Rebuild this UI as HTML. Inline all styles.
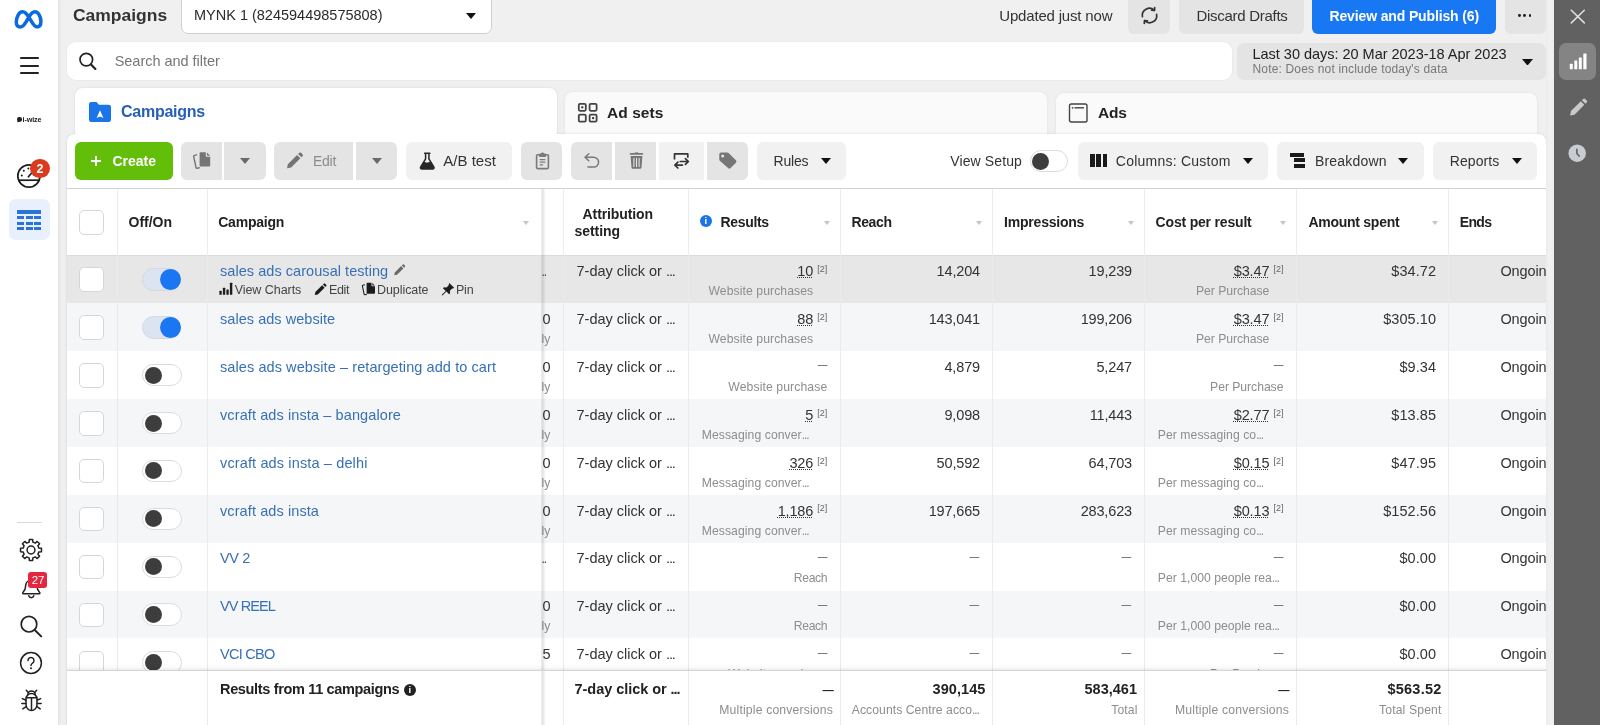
<!DOCTYPE html>
<html lang="en"><head><meta charset="utf-8"><title>Campaigns</title>
<style>
*{box-sizing:border-box;margin:0;padding:0}
html,body{width:1600px;height:725px;overflow:hidden}
body{position:relative;background:#f0f0f0;font-family:"Liberation Sans",sans-serif;color:#1c1e21;font-size:14.5px}
.t{position:absolute;white-space:nowrap;line-height:1;display:block}
.abs,.box,svg.ic{position:absolute}
.box{display:block}
/* left nav */
#nav{left:0;top:0;width:58px;height:725px;background:#fff;box-shadow:1px 0 0 #e6e6e6,2px 0 4px rgba(0,0,0,.05)}
/* right rail */
#rail{left:1554px;top:0;width:46px;height:725px;background:#616161}
#railgap{left:1546px;top:0;width:8px;height:725px;background:linear-gradient(90deg,#ebebeb,#f1f1f1 40%,#f0f0f0 85%,#eaeaea)}
.btn{border-radius:6px;background:#e4e4e4}
.btn.l{background:#f1f1f1}
.btn.sq-l{border-radius:6px 0 0 6px}
.btn.sq-r{border-radius:0 6px 6px 0}
#panel{left:67px;top:134px;width:1479px;height:600px;background:#fff;border-radius:8px 8px 0 0;box-shadow:0 0 3px rgba(0,0,0,.12)}
.tab{border-radius:8px 8px 0 0;background:#fafafa}
.row{left:67px;width:1479px;height:48px}
.vl{width:1px;background:#ebebeb}
.cb{width:24.4px;height:24.4px;left:79.2px;border:1px solid #d6d6d6;border-radius:5px;background:#fff}
.tg{left:142px;width:39.5px;height:22.5px;border-radius:12px;border:1px solid #dcdcdc;background:#fff}
.tg i{position:absolute;display:block;border-radius:50%}
.tg.off i{left:2.1px;top:1.8px;width:17px;height:17px;background:#3d3d3d}
.tg.on{background:#dbe4f0;border-color:#d2d9e2;width:38.6px}
.tg.on i{left:17.3px;top:-0.2px;width:20.8px;height:20.8px;background:#1b76f2}
.du{border-bottom:1.3px dotted #555;padding-bottom:0}
.sub{color:#8d8d8d}
.clip{overflow:hidden;text-overflow:ellipsis}
.car{width:0;height:0;border-left:5px solid transparent;border-right:5px solid transparent;border-top:6px solid #111}
.scar{width:0;height:0;border-left:3.5px solid transparent;border-right:3.5px solid transparent;border-top:4.5px solid #c3c5ca}

#app{position:absolute;left:0;top:0;width:1600px;height:725px;overflow:hidden;will-change:transform}

</style></head><body><div id="app">
<span id="t0" class="t " style="top:8.00px;font-size:16px;font-weight:700;color:#333;left:72.50px;transform:scaleX(1.0920);transform-origin:0 0;">Campaigns</span>
<div class="box " style="left:180.5px;top:-6px;width:311.50px;height:39.50px;background:#fff;border:1px solid #cfcfcf;border-radius:7px"></div>
<span id="t1" class="t " style="top:8.00px;font-size:14.5px;color:#2b2b2b;left:194.00px;letter-spacing:-0.006px;">MYNK 1 (824594498575808)</span>
<div class="box car" style="left:465.5px;top:12.5px;width:10.50px;height:6.50px;border-left-width:5.2px;border-right-width:5.2px;border-top-width:6.2px"></div>
<span id="t2" class="t " style="top:8.00px;font-size:15px;color:#333;left:999.30px;letter-spacing:-0.182px;">Updated just now</span>
<div class="box btn" style="left:1128px;top:-6px;width:42.00px;height:39.80px;"></div>
<div class="box btn" style="left:1178.5px;top:-6px;width:125.50px;height:39.80px;"></div>
<span id="t3" class="t " style="top:8.00px;font-size:15px;color:#333;left:1196.50px;letter-spacing:-0.288px;">Discard Drafts</span>
<div class="box btn" style="left:1312.2px;top:-6px;width:183.80px;height:39.80px;background:#1877f2"></div>
<span id="t4" class="t " style="top:9.00px;font-size:14px;font-weight:700;color:#fff;left:1329.50px;letter-spacing:-0.136px;">Review and Publish (6)</span>
<div class="box btn" style="left:1504.5px;top:-6px;width:41.00px;height:39.80px;"></div>
<div class="box " style="left:1518.1px;top:14.1px;width:2.80px;height:2.80px;background:#222;border-radius:50%"></div>
<div class="box " style="left:1523.3999999999999px;top:14.1px;width:2.80px;height:2.80px;background:#222;border-radius:50%"></div>
<div class="box " style="left:1528.6999999999998px;top:14.1px;width:2.80px;height:2.80px;background:#222;border-radius:50%"></div>
<svg class="ic" style="left:1139px;top:5.4px" width="21" height="21" viewBox="0 0 21 21" ><g fill="none" stroke="#333" stroke-width="1.700" stroke-linecap="round" stroke-linejoin="round"><path d="M3.400 11.700a7.100 7.100 0 0 1 11.900-6.400"/><path d="M17.600 9.300a7.100 7.100 0 0 1-11.900 6.400"/><path d="M15.700 2.600l-.2 2.900-2.900-.3"/><path d="M5.300 18.400l.2-2.900 2.900.3"/></g></svg>
<div class="box " style="left:66.5px;top:42.3px;width:1165.00px;height:37.50px;background:#fff;border-radius:9px;box-shadow:0 0 2px rgba(0,0,0,.08)"></div>
<svg class="ic" style="left:77px;top:50px" width="22" height="22" viewBox="0 0 22 22" ><g fill="none" stroke="#222" stroke-width="1.7" stroke-linecap="round"><circle cx="9.3" cy="9.6" r="6.3"/><path d="M14 14.4l4.400 4.500" stroke-width="2.200"/></g></svg>
<span id="t5" class="t " style="top:54.00px;font-size:14.5px;color:#767676;left:114.70px;letter-spacing:-0.029px;">Search and filter</span>
<div class="box btn" style="left:1236.5px;top:42.5px;width:309.00px;height:37.30px;border-radius:7px"></div>
<span id="t6" class="t " style="top:47.00px;font-size:14.5px;color:#222;left:1252.50px;letter-spacing:-0.020px;">Last 30 days: 20 Mar 2023-18 Apr 2023</span>
<span id="t7" class="t " style="top:63.00px;font-size:12px;color:#777;left:1252.50px;letter-spacing:0.169px;">Note: Does not include today's data</span>
<div class="box car" style="left:1521.5px;top:59px;width:11.50px;height:7.00px;border-left-width:5.7px;border-right-width:5.7px;border-top-width:6.6px"></div>
<div class="box tab" style="left:75px;top:88px;width:481.50px;height:52.00px;background:#fff;box-shadow:0 0 3px rgba(0,0,0,.10)"></div>
<div class="box tab" style="left:565px;top:92.4px;width:482.00px;height:47.60px;box-shadow:0 0 3px rgba(0,0,0,.07)"></div>
<div class="box tab" style="left:1056px;top:92.5px;width:481.00px;height:47.50px;box-shadow:0 0 3px rgba(0,0,0,.07)"></div>
<div class="box" id="panel"></div>
<div class="box " style="left:76px;top:128px;width:480.00px;height:8.00px;background:#fff"></div>
<svg class="ic" style="left:88px;top:100.6px" width="24" height="22" viewBox="0 0 24 22" ><path d="M1 3.2A2.2 2.2 0 0 1 3.2 1h5.3l2.4 2.8h9.9A2.2 2.2 0 0 1 23 6v12.8a2.2 2.2 0 0 1-2.2 2.2H3.2A2.2 2.2 0 0 1 1 18.800z" fill="#1b74e8"/><path d="M12 9.300l3.400 7.600-3.400-1.500-3.400 1.500z" fill="#fff"/></svg>
<span id="t8" class="t " style="top:104.00px;font-size:16px;font-weight:700;color:#2760b8;left:121.00px;letter-spacing:-0.250px;">Campaigns</span>
<svg class="ic" style="left:577.3px;top:102px" width="22" height="22" viewBox="0 0 22 22" ><g fill="none" stroke="#444" stroke-width="1.8"><rect x="1.8" y="1.800" width="7" height="7" rx="1.2"/><rect x="12.6" y="1.800" width="7" height="7" rx="1.2"/><rect x="1.8" y="12.600" width="7" height="7" rx="1.2"/><rect x="12.6" y="12.600" width="7" height="7" rx="1.2"/></g><rect x="4.300" y="4.300" width="2" height="2" fill="#333"/><rect x="15.100" y="15.100" width="2" height="2" fill="#333"/></svg>
<span id="t9" class="t " style="top:105.00px;font-size:15.5px;font-weight:700;color:#222;left:607.00px;letter-spacing:0.071px;">Ad sets</span>
<svg class="ic" style="left:1068px;top:101.5px" width="22" height="22" viewBox="0 0 22 22" ><g fill="none" stroke="#444" stroke-width="1.4"><rect x="1.500" y="2" width="17.500" height="18" rx="1.8"/><path d="M6.500 5.800h9.500"/></g><circle cx="4.600" cy="5.800" r="0.900" fill="#444"/></svg>
<span id="t10" class="t " style="top:105.00px;font-size:15.5px;font-weight:700;color:#222;left:1098.00px;letter-spacing:-0.266px;">Ads</span>
<div class="box btn" style="left:75px;top:142.3px;width:97.50px;height:37.50px;background:#63be09"></div>
<div class="box " style="left:91px;top:160.2px;width:10.20px;height:1.60px;background:#fff"></div>
<div class="box " style="left:95.3px;top:156px;width:1.60px;height:10.00px;background:#fff"></div>
<span id="t11" class="t " style="top:154.00px;font-size:14px;font-weight:700;color:#fff;left:112.50px;letter-spacing:-0.016px;">Create</span>
<div class="box btn sq-l" style="left:181px;top:142.3px;width:41.30px;height:37.50px;"></div>
<div class="box btn sq-r" style="left:224px;top:142.3px;width:41.80px;height:37.50px;"></div>
<div class="box " style="left:240.0px;top:158.0px;width:10.40px;height:6.40px;width:0;height:0;border-left:5.2px solid transparent;border-right:5.2px solid transparent;border-top:6.4px solid #6a6a6a"></div>
<div class="box btn sq-l" style="left:274px;top:142.3px;width:79.00px;height:37.50px;"></div>
<span id="t12" class="t " style="top:154.00px;font-size:14px;color:#8c8c8c;left:312.90px;letter-spacing:-0.206px;">Edit</span>
<div class="box btn sq-r" style="left:356px;top:142.3px;width:41.00px;height:37.50px;"></div>
<div class="box " style="left:371.5px;top:158.0px;width:10.40px;height:6.40px;width:0;height:0;border-left:5.2px solid transparent;border-right:5.2px solid transparent;border-top:6.4px solid #6a6a6a"></div>
<div class="box btn l" style="left:406.3px;top:142.3px;width:106.00px;height:37.50px;"></div>
<span id="t13" class="t " style="top:153.00px;font-size:15px;color:#333;left:443.20px;letter-spacing:0.034px;">A/B test</span>
<div class="box btn" style="left:521px;top:142.3px;width:41.40px;height:37.50px;"></div>
<div class="box btn sq-l" style="left:571px;top:142.3px;width:41.00px;height:37.50px;"></div>
<div class="box btn" style="left:615px;top:142.3px;width:41.30px;height:37.50px;border-radius:0"></div>
<div class="box btn l" style="left:658.7px;top:142.3px;width:45.00px;height:37.50px;border-radius:0"></div>
<div class="box btn sq-r" style="left:707px;top:142.3px;width:40.80px;height:37.50px;"></div>
<div class="box btn l" style="left:757.2px;top:142.3px;width:88.80px;height:37.50px;"></div>
<span id="t14" class="t " style="top:154.00px;font-size:14px;color:#333;left:773.50px;letter-spacing:-0.199px;">Rules</span>
<div class="box " style="left:820.5999999999999px;top:158.3px;width:10.40px;height:6.20px;width:0;height:0;border-left:5.2px solid transparent;border-right:5.2px solid transparent;border-top:6.2px solid #111"></div>
<span id="t15" class="t " style="top:154.00px;font-size:14px;color:#333;left:950.30px;letter-spacing:0.112px;">View Setup</span>
<div class="box " style="left:1030.4px;top:150.3px;width:38.10px;height:21.70px;background:#fff;border:1px solid #dcdcdc;border-radius:11px"></div>
<div class="box " style="left:1032.4px;top:152.7px;width:17.00px;height:17.00px;background:#3d3d3d;border-radius:50%"></div>
<div class="box btn l" style="left:1078px;top:142.3px;width:190.00px;height:37.50px;"></div>
<div class="box " style="left:1090px;top:154px;width:4.50px;height:13.20px;background:#1a1a1a"></div>
<div class="box " style="left:1096.3px;top:154px;width:4.50px;height:13.20px;background:#1a1a1a"></div>
<div class="box " style="left:1102.6px;top:154px;width:4.50px;height:13.20px;background:#1a1a1a"></div>
<span id="t16" class="t " style="top:154.00px;font-size:14px;color:#333;left:1115.80px;letter-spacing:0.236px;">Columns: Custom</span>
<div class="box " style="left:1242.7px;top:158.3px;width:10.40px;height:6.20px;width:0;height:0;border-left:5.2px solid transparent;border-right:5.2px solid transparent;border-top:6.2px solid #111"></div>
<div class="box btn l" style="left:1277px;top:142.3px;width:146.80px;height:37.50px;"></div>
<div class="box " style="left:1290px;top:153px;width:13.50px;height:3.60px;background:#1a1a1a"></div>
<div class="box " style="left:1294px;top:158.4px;width:11.00px;height:3.60px;background:#1a1a1a"></div>
<div class="box " style="left:1294px;top:163.9px;width:11.00px;height:3.70px;background:#1a1a1a"></div>
<span id="t17" class="t " style="top:154.00px;font-size:14px;color:#333;left:1315.00px;letter-spacing:0.184px;">Breakdown</span>
<div class="box " style="left:1398.0px;top:158.3px;width:10.40px;height:6.20px;width:0;height:0;border-left:5.2px solid transparent;border-right:5.2px solid transparent;border-top:6.2px solid #111"></div>
<div class="box btn l" style="left:1432.6px;top:142.3px;width:104.90px;height:37.50px;"></div>
<span id="t18" class="t " style="top:154.00px;font-size:14px;color:#333;left:1449.70px;letter-spacing:0.096px;">Reports</span>
<div class="box " style="left:1511.8px;top:158.3px;width:10.40px;height:6.20px;width:0;height:0;border-left:5.2px solid transparent;border-right:5.2px solid transparent;border-top:6.2px solid #111"></div>
<div class="box " style="left:67px;top:188.3px;width:1479.00px;height:1.00px;background:#d2d2d2"></div>
<div class="box " style="left:67px;top:255px;width:1479.00px;height:48.00px;background:#e7e7e7"></div>
<div class="box " style="left:67px;top:303px;width:1479.00px;height:48.00px;background:#f5f6f7"></div>
<div class="box " style="left:67px;top:399px;width:1479.00px;height:48.00px;background:#f5f6f7"></div>
<div class="box " style="left:67px;top:495px;width:1479.00px;height:48.00px;background:#f5f6f7"></div>
<div class="box " style="left:67px;top:591px;width:1479.00px;height:47.00px;background:#f5f6f7"></div>
<div class="box " style="left:67px;top:254.6px;width:1479.00px;height:0.80px;background:#dcdcdc"></div>
<div class="box vl" style="left:116.5px;top:189px;width:1.00px;height:482.00px;"></div>
<div class="box vl" style="left:206.5px;top:189px;width:1.00px;height:536.00px;"></div>
<div class="box vl" style="left:562.9px;top:189px;width:1.00px;height:536.00px;"></div>
<div class="box vl" style="left:687.9px;top:189px;width:1.00px;height:536.00px;"></div>
<div class="box vl" style="left:840.0px;top:189px;width:1.00px;height:536.00px;"></div>
<div class="box vl" style="left:991.9px;top:189px;width:1.00px;height:536.00px;"></div>
<div class="box vl" style="left:1143.9px;top:189px;width:1.00px;height:536.00px;"></div>
<div class="box vl" style="left:1296.1px;top:189px;width:1.00px;height:536.00px;"></div>
<div class="box vl" style="left:1448.1px;top:189px;width:1.00px;height:536.00px;"></div>
<span id="t19" class="t " style="top:215.00px;font-size:14px;font-weight:700;color:#222;left:128.50px;letter-spacing:-0.008px;">Off/On</span>
<span id="t20" class="t " style="top:215.00px;font-size:14px;font-weight:700;color:#222;left:218.20px;letter-spacing:-0.211px;">Campaign</span>
<span id="t21" class="t " style="top:215.00px;font-size:14px;font-weight:700;color:#222;left:720.60px;letter-spacing:-0.340px;">Results</span>
<span id="t22" class="t " style="top:215.00px;font-size:14px;font-weight:700;color:#222;left:851.40px;letter-spacing:-0.366px;">Reach</span>
<span id="t23" class="t " style="top:215.00px;font-size:14px;font-weight:700;color:#222;left:1004.10px;letter-spacing:-0.217px;">Impressions</span>
<span id="t24" class="t " style="top:215.00px;font-size:14px;font-weight:700;color:#222;left:1155.60px;letter-spacing:-0.188px;">Cost per result</span>
<span id="t25" class="t " style="top:215.00px;font-size:14px;font-weight:700;color:#222;left:1308.40px;letter-spacing:-0.259px;">Amount spent</span>
<span id="t26" class="t " style="top:215.00px;font-size:14px;font-weight:700;color:#222;left:1459.70px;letter-spacing:-0.634px;">Ends</span>
<span id="t27" class="t " style="top:207.00px;font-size:14px;font-weight:700;color:#222;left:582.60px;letter-spacing:-0.103px;">Attribution</span>
<span id="t28" class="t " style="top:224.00px;font-size:14px;font-weight:700;color:#222;left:574.60px;letter-spacing:-0.070px;">setting</span>
<div class="box " style="left:523.2px;top:220.9px;width:7.60px;height:4.80px;width:0;height:0;border-left:3.8px solid transparent;border-right:3.8px solid transparent;border-top:4.8px solid #c2c4c9"></div>
<div class="box " style="left:823.7px;top:220.9px;width:7.60px;height:4.80px;width:0;height:0;border-left:3.8px solid transparent;border-right:3.8px solid transparent;border-top:4.8px solid #c2c4c9"></div>
<div class="box " style="left:975.6px;top:220.9px;width:7.60px;height:4.80px;width:0;height:0;border-left:3.8px solid transparent;border-right:3.8px solid transparent;border-top:4.8px solid #c2c4c9"></div>
<div class="box " style="left:1127.6000000000001px;top:220.9px;width:7.60px;height:4.80px;width:0;height:0;border-left:3.8px solid transparent;border-right:3.8px solid transparent;border-top:4.8px solid #c2c4c9"></div>
<div class="box " style="left:1279.6000000000001px;top:220.9px;width:7.60px;height:4.80px;width:0;height:0;border-left:3.8px solid transparent;border-right:3.8px solid transparent;border-top:4.8px solid #c2c4c9"></div>
<div class="box " style="left:1431.7px;top:220.9px;width:7.60px;height:4.80px;width:0;height:0;border-left:3.8px solid transparent;border-right:3.8px solid transparent;border-top:4.8px solid #c2c4c9"></div>
<div class="box " style="left:699.8px;top:214.8px;width:12.40px;height:12.40px;background:#1b74e8;border-radius:50%"></div>
<span id="t29" class="t " style="top:216.00px;font-size:9.5px;font-weight:700;color:#fff;left:704.50px;font-family:"Liberation Serif",serif;">i</span>
<div class="box cb" style="left:79px;top:210px;width:24.60px;height:24.50px;"></div>
<div class="box" style="left:0;top:0;width:1600px;height:671px;overflow:hidden"><div class="box cb" style="left:79px;top:267.3px;width:24.60px;height:24.50px;"></div>
<div class="box tg on" style="top:268.1px"><i></i></div>
<span id="t30" class="t " style="top:264.00px;font-size:14.5px;color:#3870b6;left:220.00px;letter-spacing:0.052px;">sales ads carousal testing</span>
<span id="t31" class="t " style="top:266.00px;font-size:12px;color:#444;left:541.40px;letter-spacing:-1px;">..</span>
<span id="t32" class="t " style="top:264.00px;font-size:14.5px;color:#333;left:576.50px;letter-spacing:0.002px;">7-day click or <span style="letter-spacing:-1.1px">...</span></span>
<span id="t33" class="t " style="top:264.00px;font-size:14.5px;color:#333;right:786.80px;letter-spacing:-0.15px;text-decoration:underline dotted #333;text-decoration-thickness:1.3px;text-underline-offset:0.5px;text-decoration-skip-ink:none;">10</span><span id="t34" class="t " style="top:265.00px;font-size:9px;color:#666;right:772.70px;">[2]</span><span id="t35" class="t " style="top:285.00px;font-size:12.2px;color:#8d8d8d;left:708.50px;letter-spacing:0.075px;">Website purchases</span>
<span id="t36" class="t " style="top:264.00px;font-size:14.5px;color:#333;right:620.00px;letter-spacing:-0.15px;">14,204</span>
<span id="t37" class="t " style="top:264.00px;font-size:14.5px;color:#333;right:468.00px;letter-spacing:-0.15px;">19,239</span>
<span id="t38" class="t " style="top:264.00px;font-size:14.5px;color:#333;right:330.70px;letter-spacing:-0.15px;text-decoration:underline dotted #333;text-decoration-thickness:1.3px;text-underline-offset:0.5px;text-decoration-skip-ink:none;">$3.47</span><span id="t39" class="t " style="top:265.00px;font-size:9px;color:#666;right:316.60px;">[2]</span><span id="t40" class="t " style="top:285.00px;font-size:12.2px;color:#8d8d8d;left:1196.00px;letter-spacing:-0.045px;">Per Purchase</span>
<span id="t41" class="t " style="top:264.00px;font-size:14.5px;color:#333;right:163.90px;letter-spacing:-0.15px;letter-spacing:0.08px;">$34.72</span>
<span id="t42" class="t " style="top:264.00px;font-size:14.5px;color:#333;left:1500.40px;letter-spacing:-0.1px;">Ongoing</span>
<div class="box cb" style="left:79px;top:315.2px;width:24.60px;height:24.50px;"></div>
<div class="box tg on" style="top:316.0px"><i></i></div>
<span id="t43" class="t " style="top:312.00px;font-size:14.5px;color:#3870b6;left:220.00px;letter-spacing:0.044px;">sales ads website</span>
<span id="t44" class="t " style="top:312.00px;font-size:14.5px;color:#333;left:542.60px;">0</span>
<span id="t45" class="t " style="top:333.00px;font-size:12.2px;color:#8d8d8d;left:541.60px;">ly</span>
<span id="t46" class="t " style="top:312.00px;font-size:14.5px;color:#333;left:576.50px;letter-spacing:0.002px;">7-day click or <span style="letter-spacing:-1.1px">...</span></span>
<span id="t47" class="t " style="top:312.00px;font-size:14.5px;color:#333;right:786.80px;letter-spacing:-0.15px;text-decoration:underline dotted #333;text-decoration-thickness:1.3px;text-underline-offset:0.5px;text-decoration-skip-ink:none;">88</span><span id="t48" class="t " style="top:313.00px;font-size:9px;color:#666;right:772.70px;">[2]</span><span id="t49" class="t " style="top:333.00px;font-size:12.2px;color:#8d8d8d;left:708.50px;letter-spacing:0.075px;">Website purchases</span>
<span id="t50" class="t " style="top:312.00px;font-size:14.5px;color:#333;right:620.00px;letter-spacing:-0.15px;">143,041</span>
<span id="t51" class="t " style="top:312.00px;font-size:14.5px;color:#333;right:468.00px;letter-spacing:-0.15px;">199,206</span>
<span id="t52" class="t " style="top:312.00px;font-size:14.5px;color:#333;right:330.70px;letter-spacing:-0.15px;text-decoration:underline dotted #333;text-decoration-thickness:1.3px;text-underline-offset:0.5px;text-decoration-skip-ink:none;">$3.47</span><span id="t53" class="t " style="top:313.00px;font-size:9px;color:#666;right:316.60px;">[2]</span><span id="t54" class="t " style="top:333.00px;font-size:12.2px;color:#8d8d8d;left:1196.00px;letter-spacing:-0.045px;">Per Purchase</span>
<span id="t55" class="t " style="top:312.00px;font-size:14.5px;color:#333;right:163.90px;letter-spacing:-0.15px;letter-spacing:0.08px;">$305.10</span>
<span id="t56" class="t " style="top:312.00px;font-size:14.5px;color:#333;left:1500.40px;letter-spacing:-0.1px;">Ongoing</span>
<div class="box cb" style="left:79px;top:363.1px;width:24.60px;height:24.50px;"></div>
<div class="box tg off" style="top:363.90000000000003px"><i></i></div>
<span id="t57" class="t " style="top:360.00px;font-size:14.5px;color:#3870b6;left:220.00px;letter-spacing:0.083px;">sales ads website – retargeting add to cart</span>
<span id="t58" class="t " style="top:360.00px;font-size:14.5px;color:#333;left:542.60px;">0</span>
<span id="t59" class="t " style="top:381.00px;font-size:12.2px;color:#8d8d8d;left:541.60px;">ly</span>
<span id="t60" class="t " style="top:360.00px;font-size:14.5px;color:#333;left:576.50px;letter-spacing:0.002px;">7-day click or <span style="letter-spacing:-1.1px">...</span></span>
<span id="t61" class="t " style="top:360.00px;font-size:9.7px;font-weight:700;color:#707070;right:772.70px;">—</span><span id="t62" class="t " style="top:381.00px;font-size:12.2px;color:#8d8d8d;left:728.30px;letter-spacing:0.104px;">Website purchase</span>
<span id="t63" class="t " style="top:360.00px;font-size:14.5px;color:#333;right:620.00px;letter-spacing:-0.15px;">4,879</span>
<span id="t64" class="t " style="top:360.00px;font-size:14.5px;color:#333;right:468.00px;letter-spacing:-0.15px;">5,247</span>
<span id="t65" class="t " style="top:360.00px;font-size:9.7px;font-weight:700;color:#707070;right:316.60px;">—</span><span id="t66" class="t " style="top:381.00px;font-size:12.2px;color:#8d8d8d;left:1210.10px;letter-spacing:-0.045px;">Per Purchase</span>
<span id="t67" class="t " style="top:360.00px;font-size:14.5px;color:#333;right:163.90px;letter-spacing:-0.15px;letter-spacing:0.08px;">$9.34</span>
<span id="t68" class="t " style="top:360.00px;font-size:14.5px;color:#333;left:1500.40px;letter-spacing:-0.1px;">Ongoing</span>
<div class="box cb" style="left:79px;top:411.0px;width:24.60px;height:24.50px;"></div>
<div class="box tg off" style="top:411.8px"><i></i></div>
<span id="t69" class="t " style="top:408.00px;font-size:14.5px;color:#3870b6;left:220.00px;letter-spacing:0.102px;">vcraft ads insta – bangalore</span>
<span id="t70" class="t " style="top:408.00px;font-size:14.5px;color:#333;left:542.60px;">0</span>
<span id="t71" class="t " style="top:429.00px;font-size:12.2px;color:#8d8d8d;left:541.60px;">ly</span>
<span id="t72" class="t " style="top:408.00px;font-size:14.5px;color:#333;left:576.50px;letter-spacing:0.002px;">7-day click or <span style="letter-spacing:-1.1px">...</span></span>
<span id="t73" class="t " style="top:408.00px;font-size:14.5px;color:#333;right:786.80px;letter-spacing:-0.15px;text-decoration:underline dotted #333;text-decoration-thickness:1.3px;text-underline-offset:0.5px;text-decoration-skip-ink:none;">5</span><span id="t74" class="t " style="top:409.00px;font-size:9px;color:#666;right:772.70px;">[2]</span><span id="t75" class="t " style="top:429.00px;font-size:12.2px;color:#8d8d8d;left:701.70px;letter-spacing:0.070px;">Messaging conver<span style="letter-spacing:-1.1px">...</span></span>
<span id="t76" class="t " style="top:408.00px;font-size:14.5px;color:#333;right:620.00px;letter-spacing:-0.15px;">9,098</span>
<span id="t77" class="t " style="top:408.00px;font-size:14.5px;color:#333;right:468.00px;letter-spacing:-0.15px;">11,443</span>
<span id="t78" class="t " style="top:408.00px;font-size:14.5px;color:#333;right:330.70px;letter-spacing:-0.15px;text-decoration:underline dotted #333;text-decoration-thickness:1.3px;text-underline-offset:0.5px;text-decoration-skip-ink:none;">$2.77</span><span id="t79" class="t " style="top:409.00px;font-size:9px;color:#666;right:316.60px;">[2]</span><span id="t80" class="t " style="top:429.00px;font-size:12.2px;color:#8d8d8d;left:1157.80px;letter-spacing:0.050px;">Per messaging co<span style="letter-spacing:-1.1px">...</span></span>
<span id="t81" class="t " style="top:408.00px;font-size:14.5px;color:#333;right:163.90px;letter-spacing:-0.15px;letter-spacing:0.08px;">$13.85</span>
<span id="t82" class="t " style="top:408.00px;font-size:14.5px;color:#333;left:1500.40px;letter-spacing:-0.1px;">Ongoing</span>
<div class="box cb" style="left:79px;top:458.9px;width:24.60px;height:24.50px;"></div>
<div class="box tg off" style="top:459.7px"><i></i></div>
<span id="t83" class="t " style="top:456.00px;font-size:14.5px;color:#3870b6;left:220.00px;letter-spacing:0.134px;">vcraft ads insta – delhi</span>
<span id="t84" class="t " style="top:456.00px;font-size:14.5px;color:#333;left:542.60px;">0</span>
<span id="t85" class="t " style="top:477.00px;font-size:12.2px;color:#8d8d8d;left:541.60px;">ly</span>
<span id="t86" class="t " style="top:456.00px;font-size:14.5px;color:#333;left:576.50px;letter-spacing:0.002px;">7-day click or <span style="letter-spacing:-1.1px">...</span></span>
<span id="t87" class="t " style="top:456.00px;font-size:14.5px;color:#333;right:786.80px;letter-spacing:-0.15px;text-decoration:underline dotted #333;text-decoration-thickness:1.3px;text-underline-offset:0.5px;text-decoration-skip-ink:none;">326</span><span id="t88" class="t " style="top:457.00px;font-size:9px;color:#666;right:772.70px;">[2]</span><span id="t89" class="t " style="top:477.00px;font-size:12.2px;color:#8d8d8d;left:701.70px;letter-spacing:0.070px;">Messaging conver<span style="letter-spacing:-1.1px">...</span></span>
<span id="t90" class="t " style="top:456.00px;font-size:14.5px;color:#333;right:620.00px;letter-spacing:-0.15px;">50,592</span>
<span id="t91" class="t " style="top:456.00px;font-size:14.5px;color:#333;right:468.00px;letter-spacing:-0.15px;">64,703</span>
<span id="t92" class="t " style="top:456.00px;font-size:14.5px;color:#333;right:330.70px;letter-spacing:-0.15px;text-decoration:underline dotted #333;text-decoration-thickness:1.3px;text-underline-offset:0.5px;text-decoration-skip-ink:none;">$0.15</span><span id="t93" class="t " style="top:457.00px;font-size:9px;color:#666;right:316.60px;">[2]</span><span id="t94" class="t " style="top:477.00px;font-size:12.2px;color:#8d8d8d;left:1157.80px;letter-spacing:0.050px;">Per messaging co<span style="letter-spacing:-1.1px">...</span></span>
<span id="t95" class="t " style="top:456.00px;font-size:14.5px;color:#333;right:163.90px;letter-spacing:-0.15px;letter-spacing:0.08px;">$47.95</span>
<span id="t96" class="t " style="top:456.00px;font-size:14.5px;color:#333;left:1500.40px;letter-spacing:-0.1px;">Ongoing</span>
<div class="box cb" style="left:79px;top:506.8px;width:24.60px;height:24.50px;"></div>
<div class="box tg off" style="top:507.6px"><i></i></div>
<span id="t97" class="t " style="top:504.00px;font-size:14.5px;color:#3870b6;left:220.00px;letter-spacing:0.093px;">vcraft ads insta</span>
<span id="t98" class="t " style="top:504.00px;font-size:14.5px;color:#333;left:542.60px;">0</span>
<span id="t99" class="t " style="top:525.00px;font-size:12.2px;color:#8d8d8d;left:541.60px;">ly</span>
<span id="t100" class="t " style="top:504.00px;font-size:14.5px;color:#333;left:576.50px;letter-spacing:0.002px;">7-day click or <span style="letter-spacing:-1.1px">...</span></span>
<span id="t101" class="t " style="top:504.00px;font-size:14.5px;color:#333;right:786.80px;letter-spacing:-0.15px;text-decoration:underline dotted #333;text-decoration-thickness:1.3px;text-underline-offset:0.5px;text-decoration-skip-ink:none;">1,186</span><span id="t102" class="t " style="top:504.00px;font-size:9px;color:#666;right:772.70px;">[2]</span><span id="t103" class="t " style="top:525.00px;font-size:12.2px;color:#8d8d8d;left:701.70px;letter-spacing:0.070px;">Messaging conver<span style="letter-spacing:-1.1px">...</span></span>
<span id="t104" class="t " style="top:504.00px;font-size:14.5px;color:#333;right:620.00px;letter-spacing:-0.15px;">197,665</span>
<span id="t105" class="t " style="top:504.00px;font-size:14.5px;color:#333;right:468.00px;letter-spacing:-0.15px;">283,623</span>
<span id="t106" class="t " style="top:504.00px;font-size:14.5px;color:#333;right:330.70px;letter-spacing:-0.15px;text-decoration:underline dotted #333;text-decoration-thickness:1.3px;text-underline-offset:0.5px;text-decoration-skip-ink:none;">$0.13</span><span id="t107" class="t " style="top:504.00px;font-size:9px;color:#666;right:316.60px;">[2]</span><span id="t108" class="t " style="top:525.00px;font-size:12.2px;color:#8d8d8d;left:1157.80px;letter-spacing:0.050px;">Per messaging co<span style="letter-spacing:-1.1px">...</span></span>
<span id="t109" class="t " style="top:504.00px;font-size:14.5px;color:#333;right:163.90px;letter-spacing:-0.15px;letter-spacing:0.08px;">$152.56</span>
<span id="t110" class="t " style="top:504.00px;font-size:14.5px;color:#333;left:1500.40px;letter-spacing:-0.1px;">Ongoing</span>
<div class="box cb" style="left:79px;top:554.7px;width:24.60px;height:24.50px;"></div>
<div class="box tg off" style="top:555.5px"><i></i></div>
<span id="t111" class="t " style="top:551.00px;font-size:14.5px;color:#3870b6;left:220.00px;letter-spacing:-0.359px;">VV 2</span>
<span id="t112" class="t " style="top:553.00px;font-size:12px;color:#444;left:541.40px;letter-spacing:-1px;">..</span>
<span id="t113" class="t " style="top:551.00px;font-size:14.5px;color:#333;left:576.50px;letter-spacing:0.002px;">7-day click or <span style="letter-spacing:-1.1px">...</span></span>
<span id="t114" class="t " style="top:552.00px;font-size:9.7px;font-weight:700;color:#707070;right:772.70px;">—</span><span id="t115" class="t " style="top:572.00px;font-size:12.2px;color:#8d8d8d;left:793.80px;letter-spacing:-0.347px;">Reach</span>
<span id="t116" class="t " style="top:552.00px;font-size:9.7px;font-weight:700;color:#707070;right:620.80px;">—</span>
<span id="t117" class="t " style="top:552.00px;font-size:9.7px;font-weight:700;color:#707070;right:468.80px;">—</span>
<span id="t118" class="t " style="top:552.00px;font-size:9.7px;font-weight:700;color:#707070;right:316.60px;">—</span><span id="t119" class="t " style="top:572.00px;font-size:12.2px;color:#8d8d8d;left:1157.80px;letter-spacing:0.011px;">Per 1,000 people rea<span style="letter-spacing:-1.1px">...</span></span>
<span id="t120" class="t " style="top:551.00px;font-size:14.5px;color:#333;right:163.90px;letter-spacing:-0.15px;letter-spacing:0.08px;">$0.00</span>
<span id="t121" class="t " style="top:551.00px;font-size:14.5px;color:#333;left:1500.40px;letter-spacing:-0.1px;">Ongoing</span>
<div class="box cb" style="left:79px;top:602.6px;width:24.60px;height:24.50px;"></div>
<div class="box tg off" style="top:603.4px"><i></i></div>
<span id="t122" class="t " style="top:599.00px;font-size:14.5px;color:#3870b6;left:220.00px;letter-spacing:-0.893px;">VV REEL</span>
<span id="t123" class="t " style="top:599.00px;font-size:14.5px;color:#333;left:542.60px;">0</span>
<span id="t124" class="t " style="top:620.00px;font-size:12.2px;color:#8d8d8d;left:541.60px;">ly</span>
<span id="t125" class="t " style="top:599.00px;font-size:14.5px;color:#333;left:576.50px;letter-spacing:0.002px;">7-day click or <span style="letter-spacing:-1.1px">...</span></span>
<span id="t126" class="t " style="top:600.00px;font-size:9.7px;font-weight:700;color:#707070;right:772.70px;">—</span><span id="t127" class="t " style="top:620.00px;font-size:12.2px;color:#8d8d8d;left:793.80px;letter-spacing:-0.347px;">Reach</span>
<span id="t128" class="t " style="top:600.00px;font-size:9.7px;font-weight:700;color:#707070;right:620.80px;">—</span>
<span id="t129" class="t " style="top:600.00px;font-size:9.7px;font-weight:700;color:#707070;right:468.80px;">—</span>
<span id="t130" class="t " style="top:600.00px;font-size:9.7px;font-weight:700;color:#707070;right:316.60px;">—</span><span id="t131" class="t " style="top:620.00px;font-size:12.2px;color:#8d8d8d;left:1157.80px;letter-spacing:0.011px;">Per 1,000 people rea<span style="letter-spacing:-1.1px">...</span></span>
<span id="t132" class="t " style="top:599.00px;font-size:14.5px;color:#333;right:163.90px;letter-spacing:-0.15px;letter-spacing:0.08px;">$0.00</span>
<span id="t133" class="t " style="top:599.00px;font-size:14.5px;color:#333;left:1500.40px;letter-spacing:-0.1px;">Ongoing</span>
<div class="box cb" style="left:79px;top:650.5px;width:24.60px;height:24.50px;"></div>
<div class="box tg off" style="top:651.3px"><i></i></div>
<span id="t134" class="t " style="top:647.00px;font-size:14.5px;color:#3870b6;left:220.00px;letter-spacing:-0.732px;">VCI CBO</span>
<span id="t135" class="t " style="top:647.00px;font-size:14.5px;color:#333;left:542.60px;">5</span>
<span id="t136" class="t " style="top:647.00px;font-size:14.5px;color:#333;left:576.50px;letter-spacing:0.002px;">7-day click or <span style="letter-spacing:-1.1px">...</span></span>
<span id="t137" class="t " style="top:648.00px;font-size:9.7px;font-weight:700;color:#707070;right:772.70px;">—</span><span id="t138" class="t " style="top:668.00px;font-size:12.2px;color:#8d8d8d;left:728.30px;letter-spacing:0.104px;">Website purchase</span>
<span id="t139" class="t " style="top:648.00px;font-size:9.7px;font-weight:700;color:#707070;right:620.80px;">—</span>
<span id="t140" class="t " style="top:648.00px;font-size:9.7px;font-weight:700;color:#707070;right:468.80px;">—</span>
<span id="t141" class="t " style="top:648.00px;font-size:9.7px;font-weight:700;color:#707070;right:316.60px;">—</span><span id="t142" class="t " style="top:668.00px;font-size:12.2px;color:#8d8d8d;left:1210.10px;letter-spacing:-0.045px;">Per Purchase</span>
<span id="t143" class="t " style="top:647.00px;font-size:14.5px;color:#333;right:163.90px;letter-spacing:-0.15px;letter-spacing:0.08px;">$0.00</span>
<span id="t144" class="t " style="top:647.00px;font-size:14.5px;color:#333;left:1500.40px;letter-spacing:-0.1px;">Ongoing</span></div>
<div class="box " style="left:540.6px;top:189px;width:5.40px;height:536.00px;background:linear-gradient(90deg,rgba(0,0,0,0) 0,rgba(0,0,0,.10) 14%,rgba(0,0,0,.10) 42%,rgba(0,0,0,.035) 72%,rgba(0,0,0,0))"></div>
<div class="box " style="left:67px;top:664px;width:1479.00px;height:7.00px;background:linear-gradient(180deg,rgba(0,0,0,0),rgba(0,0,0,.02) 50%,rgba(0,0,0,.10))"></div>
<div class="box " style="left:67px;top:670.6px;width:1479.00px;height:54.40px;background:#fff"></div>
<div class="box " style="left:67px;top:670.2px;width:1479.00px;height:1.00px;background:#d6d6d6"></div>
<div class="box vl" style="left:206.5px;top:671px;width:1.00px;height:54.00px;"></div>
<div class="box vl" style="left:562.9px;top:671px;width:1.00px;height:54.00px;"></div>
<div class="box vl" style="left:687.9px;top:671px;width:1.00px;height:54.00px;"></div>
<div class="box vl" style="left:840.0px;top:671px;width:1.00px;height:54.00px;"></div>
<div class="box vl" style="left:991.9px;top:671px;width:1.00px;height:54.00px;"></div>
<div class="box vl" style="left:1143.9px;top:671px;width:1.00px;height:54.00px;"></div>
<div class="box vl" style="left:1296.1px;top:671px;width:1.00px;height:54.00px;"></div>
<div class="box vl" style="left:1448.1px;top:671px;width:1.00px;height:54.00px;"></div>
<div class="box " style="left:540.6px;top:671px;width:5.40px;height:54.00px;background:linear-gradient(90deg,rgba(0,0,0,0) 0,rgba(0,0,0,.10) 14%,rgba(0,0,0,.10) 42%,rgba(0,0,0,.035) 72%,rgba(0,0,0,0))"></div>
<span id="t145" class="t " style="top:682.00px;font-size:14.5px;font-weight:700;color:#222;left:220.00px;letter-spacing:-0.341px;">Results from 11 campaigns</span>
<div class="box " style="left:404px;top:683.5px;width:12.00px;height:12.00px;background:#222;border-radius:50%"></div>
<span id="t146" class="t " style="top:685.00px;font-size:9.5px;font-weight:700;color:#fff;left:408.50px;font-family:"Liberation Serif",serif;">i</span>
<span id="t147" class="t " style="top:682.00px;font-size:14.5px;font-weight:700;color:#222;left:574.50px;letter-spacing:-0.041px;">7-day click or <span style="letter-spacing:-1.1px">...</span></span>
<span id="t148" class="t " style="top:685.00px;font-size:11.25px;font-weight:700;color:#222;right:766.25px;">—</span>
<span id="t149" class="t " style="top:704.00px;font-size:12.2px;color:#8d8d8d;left:719.25px;letter-spacing:0.166px;">Multiple conversions</span>
<span id="t150" class="t " style="top:682.00px;font-size:14.5px;font-weight:700;color:#222;left:932.50px;letter-spacing:0.083px;">390,145</span>
<span id="t151" class="t " style="top:704.00px;font-size:12.2px;color:#8d8d8d;left:851.75px;letter-spacing:0.052px;">Accounts Centre acco<span style="letter-spacing:-1.1px">...</span></span>
<span id="t152" class="t " style="top:682.00px;font-size:14.5px;font-weight:700;color:#222;left:1084.50px;letter-spacing:0.011px;">583,461</span>
<span id="t153" class="t " style="top:704.00px;font-size:12.2px;color:#8d8d8d;left:1111.25px;letter-spacing:0.100px;">Total</span>
<span id="t154" class="t " style="top:685.00px;font-size:11.25px;font-weight:700;color:#222;right:310.50px;">—</span>
<span id="t155" class="t " style="top:704.00px;font-size:12.2px;color:#8d8d8d;left:1175.00px;letter-spacing:0.179px;">Multiple conversions</span>
<span id="t156" class="t " style="top:682.00px;font-size:14.5px;font-weight:700;color:#222;left:1387.50px;letter-spacing:0.225px;">$563.52</span>
<span id="t157" class="t " style="top:704.00px;font-size:12.2px;color:#8d8d8d;left:1379.00px;letter-spacing:0.138px;">Total Spent</span>
<div class="box" id="railgap"></div>
<div class="box" id="rail"></div>
<div class="box " style="left:1558.5px;top:42.8px;width:37.50px;height:37.00px;background:#848484;border-radius:7px"></div>
<div class="box" id="nav"></div>
<svg class="ic" style="left:1569px;top:8px" width="18" height="18" viewBox="0 0 18 18" ><path d="M2.300 2.300l13 12.600M15.300 2.300l-13 12.600" stroke="#e2e2e2" stroke-width="1.5" fill="none" stroke-linecap="round"/></svg>
<svg class="ic" style="left:1568px;top:51px" width="20" height="20" viewBox="0 0 20 20" ><g fill="#fff"><rect x="1.800" y="12.800" width="3" height="5.400" rx=".5"/><rect x="6.300" y="9.600" width="3" height="8.600" rx=".5"/><rect x="10.800" y="6.400" width="3" height="11.800" rx=".5"/><rect x="15.300" y="2.400" width="3.200" height="15.800" rx=".5"/></g></svg>
<svg class="ic" style="left:1568.6px;top:98.2px" width="18.6" height="18.6" viewBox="0 0 20 20" ><g fill="#c9c9c9"><path d="M1.200 18.800l.9-4.700L12.700 3.500l3.800 3.800L5.900 17.900zM13.900 2.300l1.300-1.300a1.500 1.500 0 0 1 2.100 0l1.700 1.700a1.500 1.500 0 0 1 0 2.100l-1.300 1.300z"/></g></svg>
<svg class="ic" style="left:1568.2px;top:143.9px" width="18.4" height="18.4" viewBox="0 0 18.400 18.400" ><circle cx="9.200" cy="9.200" r="8.700" fill="#c9ccd2"/><path d="M8.900 5.200v4.200l2.200 2.700" stroke="#616161" stroke-width="1.600" fill="none" stroke-linecap="round"/></svg>
<svg class="ic" style="left:192px;top:151px" width="20" height="19" viewBox="0 0 20 19" ><path d="M7.600 2.300a1 1 0 0 1 1-1h5.200v3.600a.9.900 0 0 0 .9.900h3.500v8.600a1 1 0 0 1-1 1H8.600a1 1 0 0 1-1-1z" fill="#767676"/><path d="M14.900 1.500l3.200 3.300h-2.500a.7.700 0 0 1-.7-.7z" fill="#767676"/><path d="M4.600 3.900l-2.200.5a.9.900 0 0 0-.7 1.100l2.300 11a.9.900 0 0 0 1.100.7l2.200-.5" fill="none" stroke="#767676" stroke-width="1.400" stroke-linecap="round"/></svg>
<svg class="ic" style="left:286.4px;top:151.6px" width="17.4" height="17.4" viewBox="0 0 20 20" ><g fill="#747474"><path d="M1.200 18.800l.9-4.700L12.700 3.500l3.800 3.800L5.900 17.900zM13.900 2.300l1.300-1.300a1.500 1.500 0 0 1 2.100 0l1.700 1.700a1.500 1.500 0 0 1 0 2.100l-1.300 1.300z"/></g></svg>
<svg class="ic" style="left:418.5px;top:151.5px" width="16.5" height="18" viewBox="0 0 16.500 18" ><path d="M5.600 1.200h5.300M6.600 1.400v5.400L1.700 15a1.300 1.300 0 0 0 1.100 2h10.900a1.300 1.300 0 0 0 1.100-2L9.900 6.800V1.400" fill="none" stroke="#262626" stroke-width="1.500" stroke-linecap="round" stroke-linejoin="round"/><path d="M4.300 10.400c1.400-.9 2.700.7 4.100.2 1.200-.4 2.400-.9 3.700-.3L14.800 15a1.300 1.300 0 0 1-1.100 2H2.800a1.300 1.300 0 0 1-1.100-2z" fill="#262626"/></svg>
<svg class="ic" style="left:534.5px;top:151px" width="15" height="19" viewBox="0 0 15 19" ><g fill="none" stroke="#7a7a7a" stroke-width="1.600" stroke-linejoin="round"><path d="M4.400 3.700H2.600a1 1 0 0 0-1 1v11.900a1 1 0 0 0 1 1h9.800a1 1 0 0 0 1-1V4.700a1 1 0 0 0-1-1h-1.800"/><path d="M4.700 5.100V3.400l1.700-.5a1.200 1.200 0 0 1 2.200 0l1.700.5v1.700z" fill="#7a7a7a"/><path d="M4.700 8.600h5.600M4.700 11.200h5.600M4.700 13.800h3.400" stroke-width="1.200"/></g></svg>
<svg class="ic" style="left:582.5px;top:151.5px" width="18" height="18" viewBox="0 0 18 18" ><path d="M5.800 1.800L2 5.300l3.800 3.400M2.300 5.300h8.400a4.900 4.900 0 0 1 0 9.800H4.900" fill="none" stroke="#787878" stroke-width="1.500" stroke-linecap="round" stroke-linejoin="round"/></svg>
<svg class="ic" style="left:627.5px;top:151px" width="17" height="19" viewBox="0 0 17 19" ><path d="M6.300 1.900a2.600 1.300 0 0 1 4.400 0h3.600a.9.900 0 0 1 .9.900v.9H1.800v-.9a.9.900 0 0 1 .9-.9z" fill="#767676"/><path d="M2.600 5.100h11.800l-.9 11.500a1.300 1.300 0 0 1-1.300 1.200H4.800a1.300 1.300 0 0 1-1.300-1.200z" fill="#767676"/><path d="M5.900 7.200v8.300M8.500 7.200v8.300M11.100 7.200v8.300" stroke="#e4e4e4" stroke-width="1.100" stroke-linecap="round"/></svg>
<svg class="ic" style="left:672px;top:152px" width="18" height="18" viewBox="0 0 18 18" ><g fill="none" stroke="#333" stroke-width="1.700" stroke-linecap="round" stroke-linejoin="round"><path d="M2.500 7.600V1.900h13.300v3.800" stroke-linecap="butt"/><path d="M8.300 9.500h7.900M13.400 6.600l3 2.900-3 2.900"/><path d="M10.400 13.100H3M5.900 10.200l-3 2.900 3 2.900"/></g></svg>
<svg class="ic" style="left:718px;top:151px" width="19.5" height="19" viewBox="0 0 19.500 19" ><path d="M1.300 3.300a1.800 1.800 0 0 1 1.800-1.800h6.200a1.800 1.800 0 0 1 1.300.5l7.300 7.300a1.800 1.800 0 0 1 0 2.500l-5.300 5.300a1.800 1.800 0 0 1-2.500 0L1.800 9.800a1.800 1.800 0 0 1-.5-1.300z" fill="#767676"/><circle cx="4.700" cy="5" r="1.500" fill="#e4e4e4"/></svg>
<svg class="ic" style="left:12.9px;top:7px" width="33" height="24" viewBox="0 0 33 24" ><path d="M3.300 15.300c0-5.200 2.700-10.500 6.300-10.500 2.600 0 4.500 2.300 7 6.500l2.300 3.900c1.900 3.200 3.300 4.700 5.300 4.700 2.400 0 3.700-2.100 3.700-5.300 0-4.900-2.600-9.800-6-9.800-2.300 0-4 1.900-6.200 5.600l-2.600 4.400c-1.900 3.200-3.200 5.100-5.700 5.100-2.600 0-4.100-1.800-4.100-4.600z" fill="none" stroke="#0a6be0" stroke-width="3.500" stroke-linejoin="round"/></svg>
<div class="box " style="left:19.7px;top:57.3px;width:19.60px;height:2.00px;background:#222;border-radius:1px"></div>
<div class="box " style="left:19.7px;top:64.5px;width:19.60px;height:2.00px;background:#222;border-radius:1px"></div>
<div class="box " style="left:19.7px;top:71.7px;width:19.60px;height:2.00px;background:#222;border-radius:1px"></div>
<div class="box " style="left:17px;top:117.2px;width:4.50px;height:4.50px;background:#222;border-radius:50% 50% 50% 0;transform:rotate(-10deg)"></div>
<span id="t158" class="t " style="top:116.00px;font-size:7.2px;font-weight:700;color:#222;left:22.60px;letter-spacing:-0.146px;font-family:"Liberation Serif",serif;">i-wize</span>
<svg class="ic" style="left:16px;top:162.5px" width="26" height="26" viewBox="0 0 26 26" ><g fill="none" stroke="#1c1c1c" stroke-width="1.700"><circle cx="12.900" cy="13" r="11.100"/><path d="M2.400 17.200h21"/><path d="M12.400 13.800l5.200-6" stroke-linecap="round"/></g><g fill="#1c1c1c"><circle cx="5.800" cy="12.400" r="1"/><circle cx="7.800" cy="7.800" r="1"/><circle cx="12.400" cy="5.600" r="1"/></g></svg>
<div class="box " style="left:30.3px;top:158.7px;width:19.60px;height:19.60px;background:#d93c1c;border-radius:50%"></div>
<span id="t159" class="t " style="top:163.00px;font-size:12.5px;font-weight:700;color:#fff;left:36.60px;">2</span>
<div class="box " style="left:8.5px;top:199.3px;width:41.50px;height:41.20px;background:#e7f0fc;border-radius:7px"></div>
<div class="box " style="left:17.3px;top:209.5px;width:23.70px;height:4.10px;background:#2a73d9"></div>
<div class="box " style="left:17.3px;top:216.3px;width:6.80px;height:3.20px;background:#2a73d9"></div>
<div class="box " style="left:25.75px;top:216.3px;width:6.80px;height:3.20px;background:#2a73d9"></div>
<div class="box " style="left:34.2px;top:216.3px;width:6.80px;height:3.20px;background:#2a73d9"></div>
<div class="box " style="left:17.3px;top:221.5px;width:6.80px;height:3.20px;background:#2a73d9"></div>
<div class="box " style="left:25.75px;top:221.5px;width:6.80px;height:3.20px;background:#2a73d9"></div>
<div class="box " style="left:34.2px;top:221.5px;width:6.80px;height:3.20px;background:#2a73d9"></div>
<div class="box " style="left:17.3px;top:226.70000000000002px;width:6.80px;height:3.20px;background:#2a73d9"></div>
<div class="box " style="left:25.75px;top:226.70000000000002px;width:6.80px;height:3.20px;background:#2a73d9"></div>
<div class="box " style="left:34.2px;top:226.70000000000002px;width:6.80px;height:3.20px;background:#2a73d9"></div>
<div class="box " style="left:16.5px;top:522.3px;width:25.00px;height:1.00px;background:#d9d9d9"></div>
<svg class="ic" style="left:19px;top:538px" width="24" height="24" viewBox="0 0 24 24" ><g fill="none" stroke="#222" stroke-width="1.500" stroke-linejoin="round"><path d="M10.34 1.53L13.66 1.53L13.89 4.12L16.23 5.09L18.23 3.42L20.58 5.77L18.91 7.77L19.88 10.11L22.47 10.34L22.47 13.66L19.88 13.89L18.91 16.23L20.58 18.23L18.23 20.58L16.23 18.91L13.89 19.88L13.66 22.47L10.34 22.47L10.11 19.88L7.77 18.91L5.77 20.58L3.42 18.23L5.09 16.23L4.12 13.89L1.53 13.66L1.53 10.34L4.12 10.11L5.09 7.77L3.42 5.77L5.77 3.42L7.77 5.09L10.11 4.12z"/><circle cx="12" cy="12" r="3.900"/></g></svg>
<svg class="ic" style="left:19.5px;top:577px" width="23" height="23" viewBox="0 0 23 23" ><g fill="none" stroke="#222" stroke-width="1.500" stroke-linecap="round" stroke-linejoin="round"><path d="M11.300 3.200c-3.600 0-5.700 2.700-5.700 6.100 0 3.200-1.300 4.800-2.700 6.200-.5.500-.2 1.300.5 1.300h15.800c.7 0 1-.8.500-1.300-1.400-1.400-2.700-3-2.700-6.200 0-3.400-2.100-6.100-5.700-6.100z"/><path d="M8.800 18.800a2.600 2.600 0 0 0 5 0"/></g></svg>
<div class="box " style="left:28.3px;top:572.3px;width:19.20px;height:15.40px;background:#e4263f;border-radius:3px"></div>
<span id="t160" class="t " style="top:575.00px;font-size:11.5px;color:#fff;left:31.80px;letter-spacing:-0.148px;">27</span>
<svg class="ic" style="left:19px;top:614px" width="24" height="24" viewBox="0 0 24 24" ><g fill="none" stroke="#222" stroke-width="1.700" stroke-linecap="round"><circle cx="10" cy="10.200" r="7.800"/><path d="M15.700 16l6.500 6.400" stroke-width="2"/></g></svg>
<svg class="ic" style="left:19px;top:651px" width="24" height="24" viewBox="0 0 24 24" ><circle cx="12" cy="12" r="10.400" fill="none" stroke="#222" stroke-width="1.500"/><path d="M9 9.500a3 3 0 1 1 4.600 2.500c-1 .7-1.600 1.200-1.600 2.500" fill="none" stroke="#222" stroke-width="1.500" stroke-linecap="round"/><circle cx="12" cy="17.300" r="1" fill="#222"/></svg>
<svg class="ic" style="left:19.5px;top:688px" width="23" height="24" viewBox="0 0 23 24" ><g fill="none" stroke="#222" stroke-width="1.500" stroke-linecap="round" stroke-linejoin="round"><path d="M6 11a5.500 5.500 0 0 1 11 0v5.500a5.500 6 0 0 1-11 0z"/><path d="M6.200 9.800h10.600M11.500 9.800v12"/><path d="M7.800 6.600a3.700 3.700 0 0 1 7.400 0"/><path d="M8.300 4.500L6.300 2.200M14.700 4.500l2-2.300"/><path d="M6 12.200L2.300 10.600M6 15.400H1.800M6.400 18.400l-3.600 2.500M17 12.200l3.700-1.600M17 15.400h4.200M16.600 18.400l3.600 2.500"/></g></svg>
<svg class="ic" style="left:392.9px;top:264px" width="13" height="12" viewBox="0 0 20 20" ><g fill="#6a6a6a"><path d="M1.200 18.800l.9-4.700L12.700 3.500l3.800 3.800L5.900 17.900zM13.900 2.300l1.300-1.300a1.500 1.500 0 0 1 2.100 0l1.700 1.700a1.500 1.500 0 0 1 0 2.100l-1.300 1.300z"/></g></svg>
<svg class="ic" style="left:219.4px;top:282.3px" width="14" height="13" viewBox="0 0 14 13" ><g fill="#1c1c1c"><rect x=".4" y="8.800" width="2.300" height="4" rx=".4"/><rect x="3.900" y="5.800" width="2.300" height="7" rx=".4"/><rect x="7.400" y="7.400" width="2.300" height="5.400" rx=".4"/><rect x="10.900" y=".8" width="2.400" height="12" rx=".4"/></g></svg>
<span id="t161" class="t " style="top:284.00px;font-size:12.5px;color:#444;left:234.70px;letter-spacing:-0.052px;">View Charts</span>
<svg class="ic" style="left:314.3px;top:282.6px" width="12.8" height="12.8" viewBox="0 0 20 20" ><g fill="#1c1c1c"><path d="M1.200 18.800l.9-4.700L12.700 3.500l3.800 3.800L5.900 17.900zM13.900 2.300l1.300-1.300a1.500 1.500 0 0 1 2.100 0l1.700 1.700a1.500 1.500 0 0 1 0 2.100l-1.300 1.300z"/></g></svg>
<span id="t162" class="t " style="top:284.00px;font-size:12.5px;color:#444;left:329.00px;letter-spacing:-0.387px;">Edit</span>
<svg class="ic" style="left:361px;top:282.3px" width="15" height="14" viewBox="0 0 15 14" ><path d="M5.600 1.500a.8.800 0 0 1 .8-.8h4.100v2.700a.8.800 0 0 0 .8.800h2.700v6.800a.8.800 0 0 1-.8.800H6.400a.8.800 0 0 1-.8-.8z" fill="#1c1c1c"/><path d="M11.300.9l2.500 2.600h-1.900a.6.600 0 0 1-.6-.6z" fill="#1c1c1c"/><path d="M3.500 2.800l-1.600.4a.7.700 0 0 0-.5.800l1.700 8.200a.7.700 0 0 0 .8.500l1.500-.3" fill="none" stroke="#1c1c1c" stroke-width="1.100" stroke-linecap="round"/></svg>
<span id="t163" class="t " style="top:284.00px;font-size:12.5px;color:#444;left:377.00px;letter-spacing:-0.069px;">Duplicate</span>
<svg class="ic" style="left:440.5px;top:282.3px" width="14" height="14" viewBox="0 0 14 14" ><path d="M8.300.9l4.800 4.800-1 .9-.9-.2-2.300 2.300.2 2.600-1 1-2.700-2.700L1.700 13.300l-.9.200.2-.9 3.700-3.700L2 6.200l1-1 2.600.2 2.300-2.300-.2-.9z" fill="#1c1c1c"/></svg>
<span id="t164" class="t " style="top:284.00px;font-size:12.5px;color:#444;left:456.00px;letter-spacing:-0.226px;">Pin</span>
</div></body></html>
